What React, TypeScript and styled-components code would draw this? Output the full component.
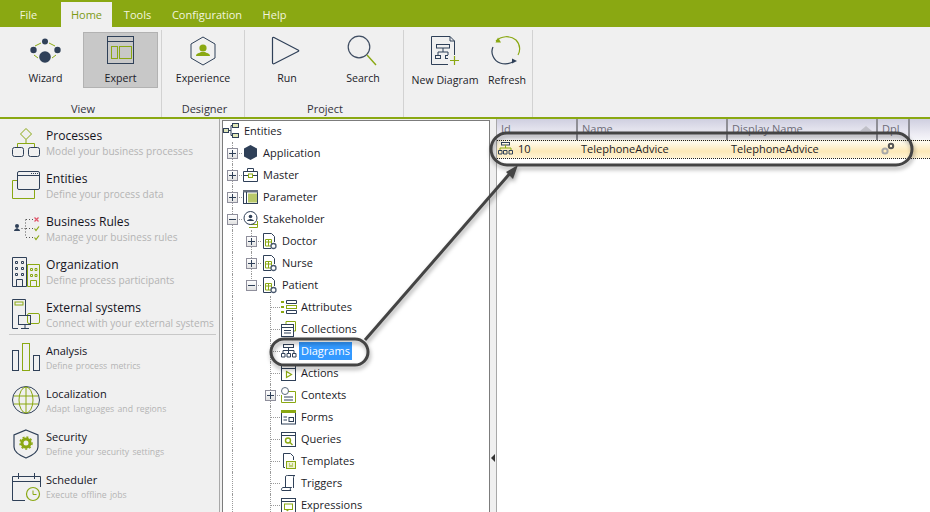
import React from "react";
import styled, { createGlobalStyle } from "styled-components";

const DARK = "#2f4058";
const GREEN = "#8aa812";

const GlobalStyle = createGlobalStyle`
  html, body {
    margin: 0;
    padding: 0;
    height: 100%;
    background: #f0f0f0;
    overflow: hidden;
  }
  body {
    font-family: "Open Sans", "Noto Sans", sans-serif;
    font-size: 11px;
    color: #1c1c28;
  }
`;

const Page = styled.div`
  position: relative;
  width: 930px;
  height: 512px;
  display: flex;
  flex-direction: column;
  overflow: hidden;
`;

const MenuBar = styled.div`
  height: 27px;
  flex: none;
  background: ${GREEN};
  display: flex;
  align-items: flex-end;
`;

const MenuTab = styled.div<{ $width: number; $active?: boolean; $trim?: number }>`
  width: ${(p) => p.$width}px;
  box-sizing: border-box;
  padding-right: ${(p) => p.$trim ?? 0}px;
  height: 25px;
  line-height: 25px;
  text-align: center;
  color: ${(p) => (p.$active ? "#7d9a14" : "#f2f5df")};
  background: ${(p) => (p.$active ? "#f0f0f0" : "transparent")};
`;

const Ribbon = styled.div`
  height: 90px;
  flex: none;
  display: flex;
  background: #f0f0f0;
  border-bottom: 2px solid ${GREEN};
  box-sizing: content-box;
`;

const Group = styled.div<{ $width: number; $left: number }>`
  width: ${(p) => p.$width}px;
  box-sizing: border-box;
  padding: 5px 0 0 ${(p) => p.$left}px;
  margin-top: 3px;
  display: flex;
  flex-direction: column;
  border-right: 1px solid #d2d2d2;
  position: relative;
`;

const GroupButtons = styled.div`
  display: flex;
  height: 56px;
  margin-top: -3px;
`;

const GroupLabel = styled.div<{ $shift?: number }>`
  margin: 13px 0 0 ${(p) => p.$shift ?? 0}px;
  text-align: center;
  line-height: 16px;
  color: #33333d;
`;

const RibbonButton = styled.div<{ $width: number; $active?: boolean; $low?: boolean }>`
  width: ${(p) => p.$width}px;
  box-sizing: border-box;
  display: flex;
  flex-direction: column;
  align-items: center;
  background: ${(p) => (p.$active ? "#c8c8c8" : "transparent")};
  border: 1px solid ${(p) => (p.$active ? "#b2b2b2" : "transparent")};
  padding-top: 2px;
  span {
    margin-top: ${(p) => (p.$low ? 5 : 3)}px;
    line-height: 16px;
    font-size: 10.6px;
    white-space: nowrap;
  }
  svg {
    display: block;
    flex: none;
  }
`;

const Workspace = styled.div`
  flex: 1;
  display: flex;
  min-height: 0;
`;

const SideNav = styled.div`
  width: 218px;
  flex: none;
  margin-left: 2px;
  padding: 8px 0 0 9px;
  box-sizing: border-box;
  background: #f0f0f0;
  border-right: 1px solid #a8a8a8;
`;

const NavItem = styled.div`
  height: 43px;
  display: flex;
  gap: 3px;
`;

const NavIcon = styled.svg<{ $small?: boolean }>`
  width: 32px;
  height: 38px;
  flex: none;
  margin-top: ${(p) => (p.$small ? 0 : -1)}px;
`;

const NavText = styled.div<{ $small?: boolean }>`
  padding-top: ${(p) => (p.$small ? 1 : 0)}px;
  strong {
    display: block;
    font-weight: 400;
    font-size: ${(p) => (p.$small ? 11 : 12.1)}px;
    line-height: 17px;
    color: #14141e;
    white-space: nowrap;
  }
  em {
    display: block;
    font-style: normal;
    font-size: ${(p) => (p.$small ? 8.7 : 10.1)}px;
    word-spacing: ${(p) => (p.$small ? 1 : 0)}px;
    line-height: ${(p) => (p.$small ? 14 : 15)}px;
    color: #b4b4b4;
    white-space: nowrap;
  }
`;

const NavDivider = styled.div`
  height: 1px;
  background: #c8c8c8;
  margin: -8px 7px 6px -2px;
  width: 207px;
`;

const TreePanel = styled.div`
  width: 268px;
  flex: none;
  margin: 1px 0 0 2px;
  box-sizing: border-box;
  border: 1px solid #7c7c7c;
  border-bottom: none;
  background: #fff;
  overflow: hidden;
  & > :first-child {
    margin-top: -1px;
  }
`;

const Row = styled.div`
  height: 22px;
  display: flex;
  align-items: center;
`;

const Slot = styled.div<{ $pipe?: boolean; $tee?: boolean; $stop?: boolean }>`
  width: 19px;
  height: 22px;
  flex: none;
  position: relative;
  display: flex;
  align-items: center;
  justify-content: center;
  &::before {
    content: "";
    position: absolute;
    left: 9px;
    top: 0;
    bottom: ${(p) => (p.$stop ? "11px" : "0")};
    border-left: ${(p) => (p.$pipe ? "1px dotted #9a9a9a" : "none")};
  }
  &::after {
    content: "";
    position: absolute;
    left: 10px;
    right: 0;
    top: 11px;
    border-top: ${(p) => (p.$tee ? "1px dotted #9a9a9a" : "none")};
  }
`;

const Expander = styled.div`
  width: 9px;
  height: 9px;
  background: linear-gradient(#fff, #e2e2e2);
  border: 1px solid #8f8f9c;
  position: relative;
  z-index: 1;
  &::before {
    content: "";
    position: absolute;
    left: 1px;
    right: 1px;
    top: 4px;
    height: 1px;
    background: ${DARK};
  }
`;

const ExpanderPlus = styled(Expander)`
  &::after {
    content: "";
    position: absolute;
    top: 1px;
    bottom: 1px;
    left: 4px;
    width: 1px;
    background: ${DARK};
  }
`;

const TreeIcon = styled.svg`
  width: 19px;
  height: 18px;
  flex: none;
`;

const RowLabel = styled.span<{ $selected?: boolean }>`
  padding: 0 2px;
  height: 18px;
  line-height: 18px;
  white-space: nowrap;
  background: ${(p) => (p.$selected ? "#3399ff" : "transparent")};
  color: ${(p) => (p.$selected ? "#fff" : "#1c1c28")};
`;

const Splitter = styled.div`
  width: 6px;
  flex: none;
  background: #f0f0f0;
  display: flex;
  align-items: flex-end;
  justify-content: center;
  padding-bottom: 50px;
  box-sizing: border-box;
  &::before {
    content: "";
    border-style: solid;
    border-width: 4px 4px 4px 0;
    border-color: transparent #333 transparent transparent;
  }
`;

const GridPanel = styled.div`
  flex: 1;
  background: #fff;
  border-left: 1px solid #a8a8a8;
  min-width: 0;
`;

const GridHeader = styled.div`
  height: 21px;
  display: flex;
  background: linear-gradient(#cfcfe0, #ecebf3 70%, #f6f6fa);
`;

const HeaderCell = styled.div<{ $width: number }>`
  width: ${(p) => p.$width}px;
  flex: none;
  box-sizing: border-box;
  padding: 1px 0 0 4px;
  color: #6d6d78;
  border-right: 2px solid #8f8f96;
  overflow: hidden;
  position: relative;
  line-height: 18px;
`;

const SortMark = styled.i`
  position: absolute;
  right: 4px;
  top: 7px;
  border-style: solid;
  border-width: 0 6px 5px 6px;
  border-color: transparent transparent #c0c0c8 transparent;
`;

const DataRow = styled.div`
  height: 19px;
  display: flex;
  align-items: center;
  box-sizing: border-box;
  padding-bottom: 2px;
  border-top: 1px dotted #222;
  border-bottom: 1px dotted #222;
  background: linear-gradient(#fffdf2, #fde9b8 60%, #fff3d4);
`;

const DataCell = styled.div<{ $width: number; $flush?: boolean }>`
  width: ${(p) => p.$width}px;
  flex: none;
  box-sizing: border-box;
  padding-left: ${(p) => (p.$flush ? 1 : 4)}px;
  display: flex;
  align-items: center;
  gap: 5px;
  white-space: nowrap;
`;

const Callouts = styled.svg`
  position: absolute;
  left: 0;
  top: 0;
  width: 930px;
  height: 512px;
  pointer-events: none;
  filter: drop-shadow(1px 3px 2px rgba(0, 0, 0, 0.35));
`;

const WizardIcon = () => (
  <svg width="36" height="32" viewBox="1 -3 36 32" fill="none">
    <g stroke={GREEN} strokeWidth="1">
      <path d="M8 8L14 5M22 5L28 8M7 17L11 20M29 17L25 20" />
    </g>
    <g fill={DARK}>
      <circle cx="18" cy="3.5" r="3" />
      <circle cx="6.5" cy="12" r="3.2" />
      <circle cx="30.5" cy="12" r="3.2" />
      <circle cx="18" cy="19" r="5.8" />
    </g>
  </svg>
);

const ExpertIcon = () => (
  <svg width="30" height="32" viewBox="0 0 30 32" fill="none">
    <rect x="1.5" y="1.5" width="26" height="27" stroke={DARK} />
    <path d="M1.5 6.5H27.5" stroke={DARK} />
    <rect x="5.5" y="11.5" width="6" height="12" stroke={GREEN} />
    <rect x="13.5" y="11.5" width="12" height="12" stroke={GREEN} />
  </svg>
);

const ExperienceIcon = () => (
  <svg width="32" height="32" viewBox="0 0 32 32" fill="none">
    <path d="M16 2L28 9V23L16 30L4 23V9Z" stroke={DARK} strokeLinejoin="round" />
    <circle cx="16" cy="13" r="3.6" fill={GREEN} />
    <path d="M9 21C9 18 13 18 14 17H18C19 18 23 18 23 21Z" fill={GREEN} />
  </svg>
);

const RunIcon = () => (
  <svg width="32" height="32" viewBox="1 0 32 32" fill="none">
    <path d="M4 2.5C3 2 2.5 2.5 2.5 3.5V27.5C2.5 29 3.5 29 4.5 28.5L28 16.5C29 16 29 15.5 28 15Z" stroke={DARK} strokeWidth="1.2" />
  </svg>
);

const SearchIcon = () => (
  <svg width="34" height="32" viewBox="0 0 34 32" fill="none">
    <circle cx="13" cy="12" r="10.8" stroke="#3f4d62" strokeWidth="1.2" />
    <path d="M21 20L30 30" stroke={GREEN} strokeWidth="1.4" />
  </svg>
);

const NewDiagramIcon = () => (
  <svg width="34" height="32" viewBox="2 0 34 32" fill="none">
    <path d="M5.5 1.5H24L28.5 6V29.5H5.5Z" stroke={DARK} />
    <path d="M24 1.5V6H28.5" stroke={DARK} />
    <rect x="10.5" y="9.5" width="13" height="3.5" stroke={DARK} />
    <path d="M17 13V17M12 21V17H22V21" stroke={DARK} />
    <rect x="9.5" y="20.5" width="5" height="3" stroke={DARK} />
    <rect x="19.5" y="20.5" width="5" height="3" stroke={DARK} />
    <rect x="22" y="20" width="12" height="11" fill="#f0f0f0" />
    <path d="M28.5 21V30M24 25.5H33" stroke={GREEN} strokeWidth="1.2" fill="none" />
  </svg>
);

const RefreshIcon = () => (
  <svg width="32" height="32" viewBox="1 0 32 32" fill="none">
    <path d="M6 6C11 1 20 0 26 5C31 10 30 17 28 20" stroke={GREEN} strokeWidth="1.2" />
    <path d="M8 2.5L5.5 7.5L11 7.5Z" fill={GREEN} />
    <path d="M3 12C0 18 4 26 10 28C16 30 20 29 24 26" stroke={DARK} strokeWidth="1.2" />
    <path d="M22 23.5L27 26L22 28.5Z" fill={DARK} />
  </svg>
);

const navIcons: Record<string, React.ReactNode> = {
  processes: (
    <>
      <path d="M15 2.5L20.5 8L15 13.5L9.5 8Z" stroke={GREEN} />
      <path d="M15 13.5V17M6.5 21V17.5H23.5V21" stroke={GREEN} />
      <rect x="1.5" y="21.5" width="11" height="9" rx="2" stroke={DARK} />
      <rect x="17.5" y="21.5" width="11" height="9" rx="2" stroke={DARK} />
    </>
  ),
  entities: (
    <>
      <path d="M6 11.5H1.5V29.5H23.5V20.5" stroke={GREEN} />
      <rect x="6.5" y="2.5" width="22" height="18" rx="1.5" stroke={DARK} />
      <path d="M6.5 6.5H28.5" stroke={DARK} />
      <path d="M20 4.5H27" stroke={DARK} strokeDasharray="1 1" />
    </>
  ),
  rules: (
    <>
      <circle cx="6" cy="14" r="2" fill={DARK} />
      <path d="M3 19C3 17 5 17 6 16C7 17 9 17 9 19Z" fill={DARK} />
      <path d="M10.5 16.5H14.5M14.5 7.5V25.5M15 7.5H22M15 16.5H22M15 25.5H22" stroke="#555" strokeDasharray="1 2" />
      <path d="M23.5 5.5L27.5 9.5M27.5 5.5L23.5 9.5" stroke="#e0566a" strokeWidth="1.3" />
      <path d="M23.5 16.5L25 18.5L28 14.5M23.5 25.5L25 27.5L28 23.5" stroke={GREEN} strokeWidth="1.2" />
    </>
  ),
  organization: (
    <>
      <path d="M1.5 31.5V2.5H15.5V31.5ZM5.5 31.5V24.5H11.5V31.5" stroke={DARK} />
      <path d="M4.5 6.5H6.5V8.5H4.5ZM10.5 6.5H12.5V8.5H10.5ZM4.5 12.5H6.5V14.5H4.5ZM10.5 12.5H12.5V14.5H10.5ZM4.5 18.5H6.5V20.5H4.5ZM10.5 18.5H12.5V20.5H10.5Z" stroke={DARK} />
      <path d="M16.5 9.5H28.5V31.5H16.5ZM19.5 31.5V25.5H25.5V31.5" stroke={GREEN} />
      <path d="M19.5 13.5H21.5V15.5H19.5ZM24 13.5H26V15.5H24ZM19.5 19.5H21.5V21.5H19.5ZM24 19.5H26V21.5H24Z" stroke={GREEN} />
    </>
  ),
  external: (
    <>
      <path d="M7 30.5H1.5V1.5H14.5V17" stroke={DARK} />
      <rect x="4" y="4" width="8" height="3" stroke={GREEN} />
      <rect x="16.5" y="15.5" width="12" height="10" rx="1.5" stroke={GREEN} />
      <rect x="7.5" y="17.5" width="12" height="9" stroke={DARK} />
      <path d="M10 30.5H18M14 26.5V30.5" stroke={DARK} />
    </>
  ),
  analysis: (
    <>
      <rect x="1.5" y="9.5" width="6" height="20" stroke={DARK} />
      <rect x="11.5" y="2.5" width="7" height="27" stroke={GREEN} />
      <rect x="22.5" y="14.5" width="6" height="15" stroke={DARK} />
    </>
  ),
  localization: (
    <>
      <circle cx="15" cy="16" r="13.5" stroke={DARK} />
      <ellipse cx="15" cy="16" rx="7" ry="13" stroke={GREEN} />
      <path d="M15 3V29M3 12H27M3 20H27" stroke={GREEN} />
    </>
  ),
  security: (
    <>
      <path d="M15 3L27 8V20C27 25 20 29 15 31C10 29 3 25 3 20V8Z" stroke={DARK} strokeWidth="1.2" />
      <circle cx="15" cy="16" r="4" stroke={GREEN} strokeWidth="3" />
      <circle cx="15" cy="16" r="6" stroke={GREEN} strokeWidth="1.5" strokeDasharray="2 2" />
    </>
  ),
  scheduler: (
    <>
      <path d="M14 30.5H1.5V6.5H29.5V17M1.5 11.5H29.5M7.5 3V9M23.5 3V9" stroke={DARK} />
      <circle cx="22" cy="24" r="6.5" stroke={GREEN} strokeWidth="1.2" />
      <path d="M22 20.5V24.5H25.5" stroke={GREEN} />
    </>
  ),
};

const treeIcons: Record<string, React.ReactNode> = {
  root: (
    <>
      <rect x="1.5" y="6.5" width="5" height="4" stroke={DARK} fill="#dfe6b8" />
      <rect x="10.5" y="1.5" width="6" height="4" stroke={DARK} fill="#dfe6b8" />
      <rect x="10.5" y="11.5" width="6" height="4" stroke={DARK} fill="#dfe6b8" />
      <path d="M7 8.5H9M9 3.5V13.5M9 3.5H10M9 13.5H10" stroke={DARK} />
    </>
  ),
  application: <path d="M9.5 1L16 4.5V12.5L9.5 16L3 12.5V4.5Z" fill="#2f4058" />,
  master: (
    <>
      <path d="M2.5 5.5H16.5V15.5H2.5ZM2.5 9.5H16.5M6.5 5.5V2.5H12.5V5.5" stroke={DARK} />
      <rect x="7.5" y="8" width="4" height="3.5" fill="#fff" stroke={GREEN} />
    </>
  ),
  parameter: (
    <>
      <rect x="2.5" y="2.5" width="14" height="13" stroke={DARK} />
      <rect x="2" y="2" width="15" height="2.5" fill="#66707f" />
      <rect x="7" y="5.5" width="9" height="9" fill="#b9c96a" />
      <path d="M5.5 4V15.5" stroke={DARK} />
    </>
  ),
  stakeholder: (
    <>
      <path d="M8 14.5H16.5V17.5H8" stroke={GREEN} />
      <path d="M16.5 11V17" stroke={GREEN} />
      <circle cx="9.5" cy="8" r="6.5" stroke={DARK} fill="#fff" />
      <circle cx="9.5" cy="6.5" r="1.8" fill={DARK} />
      <path d="M6 11C6 9.5 8 9.5 9.5 9C11 9.5 13 9.5 13 11Z" fill={DARK} />
    </>
  ),
  document: (
    <>
      <path d="M11 16.5H3.5V1.5H11.5L14.5 4.5V10" stroke={DARK} />
      <path d="M5.5 7.5H11.5V14H5.5ZM5.5 10H11.5M8.5 7.5V14" stroke={GREEN} />
      <circle cx="13.5" cy="14" r="2.5" stroke="#4a5a70" strokeWidth="1.3" fill="#fff" />
    </>
  ),
  attributes: (
    <>
      <path d="M2 4H5M2 9H5M2 14H5" stroke={GREEN} strokeWidth="2" />
      <path d="M7.5 2.5H17.5V5.5H7.5ZM7.5 12.5H17.5V15.5H7.5Z" stroke={DARK} />
      <rect x="7.5" y="7.5" width="10" height="3" stroke={GREEN} />
    </>
  ),
  collections: (
    <>
      <path d="M7 4V1.5H16.5V11H14.5" stroke={GREEN} />
      <rect x="2.5" y="4.5" width="12" height="12" fill="#fff" stroke={DARK} />
      <path d="M2.5 7.5H14.5M5 10.5H12M5 13H12" stroke={DARK} />
    </>
  ),
  diagrams: (
    <>
      <rect x="4.5" y="2.5" width="10" height="3" stroke={DARK} />
      <path d="M9.5 5.5V8.5M4 11V8.5H15V11M9.5 8.5V11" stroke={DARK} />
      <path d="M2.5 11.5H6V15H2.5ZM8 11.5H11.5V15H8ZM13.5 11.5H17V15H13.5Z" stroke={DARK} />
    </>
  ),
  actions: (
    <>
      <rect x="2.5" y="1.5" width="14" height="15" stroke={DARK} />
      <path d="M2.5 4.5H16.5" stroke={DARK} />
      <path d="M7.5 7.5L12.5 10.5L7.5 13.5Z" stroke={GREEN} strokeWidth="1.2" />
    </>
  ),
  contexts: (
    <>
      <path d="M9 5.5H16.5V16.5H2.5V9" stroke={GREEN} />
      <circle cx="6" cy="5" r="3.5" stroke="#5a6a7c" />
      <path d="M5 11H14M5 14H14" stroke={DARK} />
    </>
  ),
  forms: (
    <>
      <rect x="2.5" y="2.5" width="14" height="13.5" stroke={DARK} />
      <rect x="2" y="2" width="15" height="3" fill={GREEN} />
      <path d="M4.5 9H8M4.5 12H8" stroke={DARK} />
      <rect x="10" y="9.5" width="4.5" height="4" stroke={DARK} />
    </>
  ),
  queries: (
    <>
      <rect x="2.5" y="2.5" width="14" height="14" stroke={DARK} />
      <path d="M2.5 5.5H16.5" stroke={DARK} />
      <circle cx="9" cy="10.5" r="2.5" stroke={GREEN} strokeWidth="1.4" />
      <path d="M11 12.5L13.5 15" stroke={GREEN} strokeWidth="1.4" />
    </>
  ),
  templates: (
    <>
      <path d="M6 15.5H4.5V1.5H11.5L14.5 4.5V8" stroke={DARK} />
      <rect x="7.5" y="9.5" width="9" height="7" stroke={GREEN} fill="#eef2d2" />
      <path d="M10 12H11M13 12H14M10 14H14" stroke={GREEN} />
    </>
  ),
  triggers: (
    <>
      <path d="M6.5 13V3C6.5 1.5 7.5 1.5 8.5 1.5H16C15 1.5 14.5 2.5 14.5 3.5V14" stroke={DARK} />
      <path d="M3 16.5H12C11 16.5 11 13.5 12.5 13.5H4C2.5 13.5 2 16.5 3 16.5Z" stroke={DARK} />
    </>
  ),
  expressions: (
    <>
      <rect x="2.5" y="2.5" width="14" height="14" stroke={DARK} />
      <path d="M2.5 5.5H16.5" stroke={DARK} />
      <rect x="5.5" y="8" width="8" height="5.5" stroke={GREEN} />
      <path d="M8 13.5V15L10 13.5" stroke={GREEN} />
    </>
  ),
};

type TreeItem = {
  label: string;
  icon: string;
  slots: ("blank" | "pipe" | "tee" | "end")[];
  toggle?: "plus" | "minus";
  selected?: boolean;
};

const level1 = (label: string, icon: string, toggle: "plus" | "minus"): TreeItem => ({
  label,
  icon,
  toggle,
  slots: ["tee"],
});
const level2 = (label: string, icon: string, toggle: "plus" | "minus", last?: boolean): TreeItem => ({
  label,
  icon,
  toggle,
  slots: ["pipe", last ? "end" : "tee"],
});
const level3 = (label: string, icon: string, toggle?: "plus", selected?: boolean): TreeItem => ({
  label,
  icon,
  toggle,
  selected,
  slots: ["pipe", "blank", "tee"],
});

const treeRows: TreeItem[] = [
  { label: "Entities", icon: "root", slots: [] },
  level1("Application", "application", "plus"),
  level1("Master", "master", "plus"),
  level1("Parameter", "parameter", "plus"),
  level1("Stakeholder", "stakeholder", "minus"),
  level2("Doctor", "document", "plus"),
  level2("Nurse", "document", "plus"),
  level2("Patient", "document", "minus", true),
  level3("Attributes", "attributes"),
  level3("Collections", "collections"),
  level3("Diagrams", "diagrams", undefined, true),
  level3("Actions", "actions"),
  level3("Contexts", "contexts", "plus"),
  level3("Forms", "forms"),
  level3("Queries", "queries"),
  level3("Templates", "templates"),
  level3("Triggers", "triggers"),
  level3("Expressions", "expressions"),
];

const navItems = [
  { icon: "processes", title: "Processes", text: "Model your business processes" },
  { icon: "entities", title: "Entities", text: "Define your process data" },
  { icon: "rules", title: "Business Rules", text: "Manage your business rules" },
  { icon: "organization", title: "Organization", text: "Define process participants" },
  { icon: "external", title: "External systems", text: "Connect with your external systems" },
];

const navItemsSmall = [
  { icon: "analysis", title: "Analysis", text: "Define process metrics" },
  { icon: "localization", title: "Localization", text: "Adapt languages and regions" },
  { icon: "security", title: "Security", text: "Define your security settings" },
  { icon: "scheduler", title: "Scheduler", text: "Execute offline jobs" },
];

function TreeRow({ item }: { item: TreeItem }) {
  const last = item.slots.length - 1;
  return (
    <Row>
      {item.slots.map((slot, i) => (
        <Slot key={i} $pipe={slot !== "blank"} $tee={slot === "tee" || slot === "end"} $stop={slot === "end"}>
          {i === last && item.toggle === "plus" && <ExpanderPlus />}
          {i === last && item.toggle === "minus" && <Expander />}
        </Slot>
      ))}
      <TreeIcon viewBox="1 0 19 18" fill="none">
        {treeIcons[item.icon]}
      </TreeIcon>
      <RowLabel $selected={item.selected}>{item.label}</RowLabel>
    </Row>
  );
}

function NavEntry({ icon, title, text, small }: { icon: string; title: string; text: string; small?: boolean }) {
  return (
    <NavItem>
      <NavIcon viewBox="0 0 32 38" fill="none" $small={small}>
        {navIcons[icon]}
      </NavIcon>
      <NavText $small={small}>
        <strong>{title}</strong>
        <em>{text}</em>
      </NavText>
    </NavItem>
  );
}

export default function App() {
  return (
    <Page>
      <GlobalStyle />
      <MenuBar>
        <MenuTab $width={61} $trim={4}>
          File
        </MenuTab>
        <MenuTab $width={51} $active>
          Home
        </MenuTab>
        <MenuTab $width={51}>Tools</MenuTab>
        <MenuTab $width={88}>Configuration</MenuTab>
        <MenuTab $width={47}>Help</MenuTab>
      </MenuBar>

      <Ribbon>
        <Group $width={162} $left={8}>
          <GroupButtons>
            <RibbonButton $width={75}>
              <WizardIcon />
              <span>Wizard</span>
            </RibbonButton>
            <RibbonButton $width={75} $active>
              <ExpertIcon />
              <span>Expert</span>
            </RibbonButton>
          </GroupButtons>
          <GroupLabel $shift={-3}>View</GroupLabel>
        </Group>
        <Group $width={83} $left={3}>
          <GroupButtons>
            <RibbonButton $width={76}>
              <ExperienceIcon />
              <span>Experience</span>
            </RibbonButton>
          </GroupButtons>
          <GroupLabel>Designer</GroupLabel>
        </Group>
        <Group $width={159} $left={4}>
          <GroupButtons>
            <RibbonButton $width={76}>
              <RunIcon />
              <span>Run</span>
            </RibbonButton>
            <RibbonButton $width={76}>
              <SearchIcon />
              <span>Search</span>
            </RibbonButton>
          </GroupButtons>
          <GroupLabel $shift={-2}>Project</GroupLabel>
        </Group>
        <Group $width={129} $left={4}>
          <GroupButtons>
            <RibbonButton $width={74} $low>
              <NewDiagramIcon />
              <span>New Diagram</span>
            </RibbonButton>
            <RibbonButton $width={50} $low>
              <RefreshIcon />
              <span>Refresh</span>
            </RibbonButton>
          </GroupButtons>
        </Group>
      </Ribbon>

      <Workspace>
        <SideNav>
          {navItems.map((item) => (
            <NavEntry key={item.icon} {...item} />
          ))}
          <NavDivider />
          {navItemsSmall.map((item) => (
            <NavEntry key={item.icon} {...item} small />
          ))}
        </SideNav>

        <TreePanel>
          {treeRows.map((item) => (
            <TreeRow key={item.label} item={item} />
          ))}
        </TreePanel>

        <Splitter />

        <GridPanel>
          <GridHeader>
            <HeaderCell $width={81}>Id</HeaderCell>
            <HeaderCell $width={150}>Name</HeaderCell>
            <HeaderCell $width={150}>
              Display Name
              <SortMark />
            </HeaderCell>
            <HeaderCell $width={32}>Dpl</HeaderCell>
          </GridHeader>
          <DataRow>
            <DataCell $width={80} $flush>
              <svg width="15" height="13" viewBox="0 0 15 13" fill="none">
                <rect x="3.5" y="0.5" width="8" height="2.5" stroke={DARK} />
                <path d="M7.5 3V6M2 8V6H13V8" stroke={GREEN} />
                <path d="M0.5 8.5H4V12H0.5ZM5.5 8.5H9V12H5.5ZM11 8.5H14.5V12H11Z" stroke={DARK} />
              </svg>
              10
            </DataCell>
            <DataCell $width={150}>TelephoneAdvice</DataCell>
            <DataCell $width={150}>TelephoneAdvice</DataCell>
            <DataCell $width={32}>
              <svg width="14" height="13" viewBox="0 0 14 13" fill="none">
                <circle cx="4" cy="9" r="2.6" stroke="#a8a8a8" strokeWidth="2" />
                <circle cx="10" cy="4" r="2.2" stroke="#555" strokeWidth="2" />
              </svg>
            </DataCell>
          </DataRow>
        </GridPanel>
      </Workspace>

      <Callouts viewBox="0 0 930 512" fill="none">
        <rect x="491" y="133" width="421" height="32" rx="16" stroke="#444" strokeWidth="3" />
        <rect x="271" y="339" width="97" height="26" rx="13" stroke="#444" strokeWidth="3" />
        <path d="M365 340L512 171" stroke="#444" strokeWidth="3" />
        <path d="M518 165L506 172L513 179Z" fill="#444" />
      </Callouts>
    </Page>
  );
}
